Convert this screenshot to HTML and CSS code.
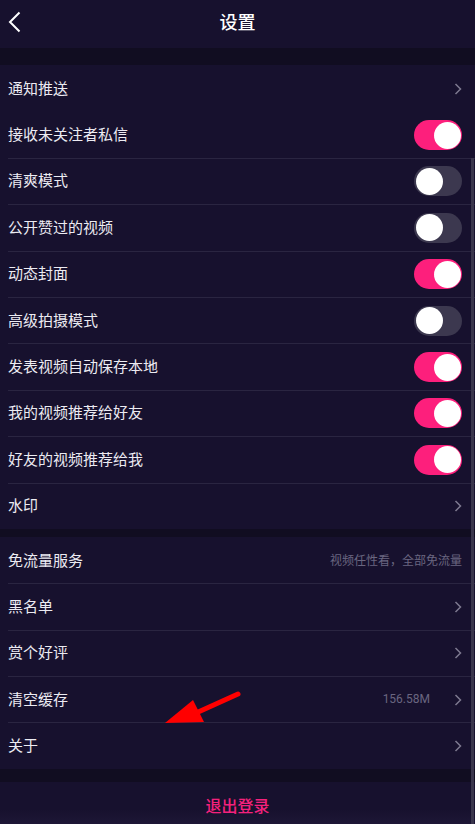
FILE: index.html
```html
<!DOCTYPE html>
<html lang="zh">
<head>
    <meta charset="UTF-8">
    <meta name="viewport" content="width=device-width, initial-scale=1.0">
    <title>设置</title>
    <link rel="stylesheet" href="styles.css">
</head>
<body>
<div class="screen">

    <!-- Barra superior -->
    <header class="topbar">
        <svg class="back" viewBox="0 0 14 22"><path d="M11.5 1.5L2 11l9.5 9.5"/></svg>
        <h1>设置</h1>
    </header>

    <div class="gap gap-top"></div>

    <!-- Grupo 1 -->
    <ul class="group">
        <li class="row first">
            <span class="label">通知推送</span>
            <svg class="chev" viewBox="0 0 8 12"><path d="M1.5 1l5 5-5 5"/></svg>
        </li>
        <li class="row first">
            <span class="label">接收未关注者私信</span>
            <span class="switch on"><i></i></span>
        </li>
        <li class="row">
            <span class="label">清爽模式</span>
            <span class="switch"><i></i></span>
        </li>
        <li class="row">
            <span class="label">公开赞过的视频</span>
            <span class="switch"><i></i></span>
        </li>
        <li class="row">
            <span class="label">动态封面</span>
            <span class="switch on"><i></i></span>
        </li>
        <li class="row">
            <span class="label">高级拍摄模式</span>
            <span class="switch"><i></i></span>
        </li>
        <li class="row">
            <span class="label">发表视频自动保存本地</span>
            <span class="switch on"><i></i></span>
        </li>
        <li class="row">
            <span class="label">我的视频推荐给好友</span>
            <span class="switch on"><i></i></span>
        </li>
        <li class="row">
            <span class="label">好友的视频推荐给我</span>
            <span class="switch on"><i></i></span>
        </li>
        <li class="row">
            <span class="label">水印</span>
            <svg class="chev" viewBox="0 0 8 12"><path d="M1.5 1l5 5-5 5"/></svg>
        </li>
    </ul>

    <div class="gap gap-mid"></div>

    <!-- Grupo 2 -->
    <ul class="group">
        <li class="row first">
            <span class="label">免流量服务</span>
            <span class="note">视频任性看，全部免流量</span>
        </li>
        <li class="row">
            <span class="label">黑名单</span>
            <svg class="chev" viewBox="0 0 8 12"><path d="M1.5 1l5 5-5 5"/></svg>
        </li>
        <li class="row">
            <span class="label">赏个好评</span>
            <svg class="chev" viewBox="0 0 8 12"><path d="M1.5 1l5 5-5 5"/></svg>
        </li>
        <li class="row">
            <span class="label">清空缓存</span>
            <span class="note size">156.58M</span>
            <svg class="chev" viewBox="0 0 8 12"><path d="M1.5 1l5 5-5 5"/></svg>
        </li>
        <li class="row">
            <span class="label">关于</span>
            <svg class="chev" viewBox="0 0 8 12"><path d="M1.5 1l5 5-5 5"/></svg>
        </li>
    </ul>

    <div class="gap gap-bottom"></div>

    <div class="logout">退出登录</div>

    <!-- barra de scroll -->
    <div class="scrollbar"></div>

    <!-- flecha roja de anotación -->
    <svg class="annot" viewBox="0 0 475 824">
        <path class="annot-line" d="M238 694L196 713"/>
        <path class="annot-head" d="M165 723L193 700L204 722Z"/>
    </svg>

</div>
</body>
</html>
```

FILE: styles.css
```css
* {
    box-sizing: border-box;
}

body {
    margin: 0;
    padding: 0;
    background-color: #17112e;
    font-family: "Noto Sans CJK SC", "Noto Sans", sans-serif;
    color: #ebe9f1;
}

.screen {
    position: relative;
    width: 475px;
    height: 824px;
    overflow: hidden;
    background-color: #17112e;
}

.topbar {
    height: 48px;
    display: flex;
    align-items: center;
    justify-content: center;
    position: relative;
}

.topbar h1 {
    margin: 0;
    font-size: 18px;
    font-weight: 500;
    color: #ffffff;
    margin-top: -7px;
}

.back {
    position: absolute;
    left: 8px;
    top: 11px;
    width: 14px;
    height: 22px;
    fill: none;
    stroke: #ffffff;
    stroke-width: 2;
}

.gap {
    background-color: #110d21;
}

.gap-top {
    height: 17px;
}

.gap-mid {
    height: 8px;
}

.gap-bottom {
    height: 13px;
}

.group {
    list-style: none;
    margin: 0;
    padding: 0;
    background-color: #17112e;
}

.row {
    height: 46.4px;
    margin-left: 8px;
    padding-right: 13px;
    display: flex;
    align-items: center;
    border-top: 1px solid #2a2541;
}

.row.first {
    border-top-color: transparent;
}

.label {
    flex: 1;
    font-size: 15px;
    color: #ecebf2;
    margin-bottom: 3px;
}

.note {
    font-size: 12px;
    color: #6a6680;
    margin-bottom: 2px;
}

.note.size {
    font-family: Roboto, sans-serif;
    font-size: 12px;
    margin-right: 24px;
}

.chev {
    width: 8px;
    height: 12px;
    fill: none;
    stroke: #7d798f;
    stroke-width: 1.5;
}

.switch {
    width: 48px;
    height: 30px;
    border-radius: 15px;
    background-color: #3c384f;
    position: relative;
}

.switch i {
    position: absolute;
    top: 1.5px;
    left: 1.5px;
    width: 27px;
    height: 27px;
    border-radius: 50%;
    background-color: #ffffff;
}

.switch.on {
    background-color: #fd1f7c;
}

.switch.on i {
    left: auto;
    right: 1.5px;
}

.logout {
    height: 46px;
    display: flex;
    align-items: center;
    justify-content: center;
    font-size: 16px;
    font-weight: 500;
    color: #f5217c;
    background: linear-gradient(#17112e 60%, #1f1838);
}

.scrollbar {
    position: absolute;
    right: 1px;
    top: 158px;
    bottom: 0;
    width: 3px;
    background-color: #3a364c;
}

.annot {
    position: absolute;
    left: 0;
    top: 0;
    width: 475px;
    height: 824px;
    pointer-events: none;
}

.annot-line {
    stroke: #ff0000;
    stroke-width: 5;
    stroke-linecap: round;
    fill: none;
}

.annot-head {
    fill: #ff0000;
}
```
